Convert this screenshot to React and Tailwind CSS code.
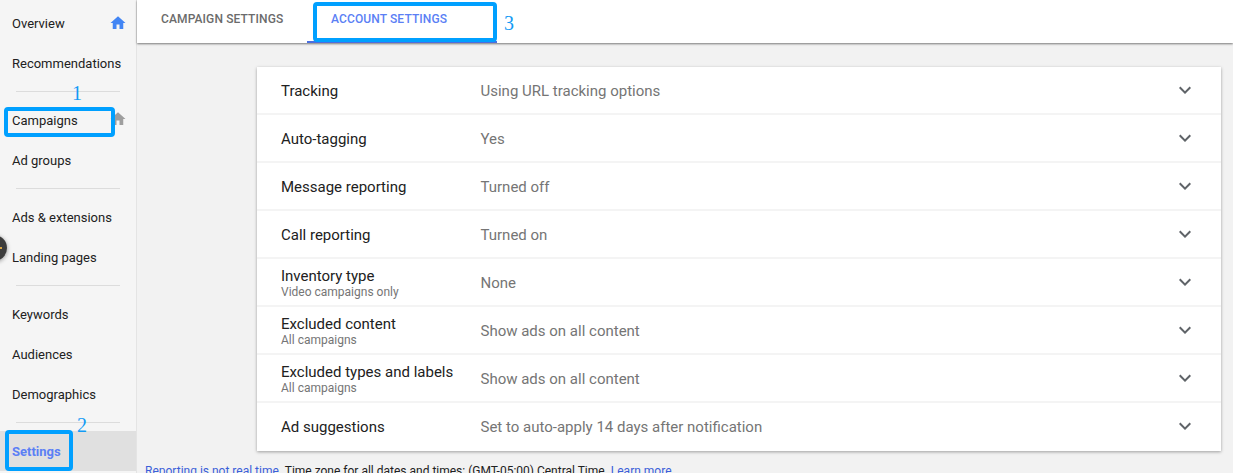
import React from "react";

const Home = ({ className }) => (
  <svg viewBox="0 0 24 24" className={className} fill="currentColor">
    <path d="M10 20v-6h4v6h5v-8h3L12 3 2 12h3v8z" />
  </svg>
);

const Chevron = () => (
  <svg viewBox="0 0 24 24" className="w-6 h-6 text-[#5f6368] -translate-y-px" fill="currentColor">
    <path d="M7.41 8.59 12 13.17l4.59-4.58L18 10l-6 6-6-6z" />
  </svg>
);

const Item = ({ children, icon, active }) => (
  <div className={`h-10 flex items-center justify-between pl-3 pr-[9px] text-[13px] ${active ? "bg-[#e0e0e0] text-[#5b7ff5] font-bold" : "text-[#212121]"}`}>
    <span className="translate-y-px">{children}</span>
    {icon}
  </div>
);

const Divider = () => <div className="my-2 mx-4 h-px bg-[#dcdcdc]" />;

const rows = [
  ["Tracking", null, "Using URL tracking options"],
  ["Auto-tagging", null, "Yes"],
  ["Message reporting", null, "Turned off"],
  ["Call reporting", null, "Turned on"],
  ["Inventory type", "Video campaigns only", "None"],
  ["Excluded content", "All campaigns", "Show ads on all content"],
  ["Excluded types and labels", "All campaigns", "Show ads on all content"],
  ["Ad suggestions", null, "Set to auto-apply 14 days after notification"],
];

const Num = ({ className, children }) => (
  <span className={`absolute text-[20px] leading-none text-[#129bf5] ${className}`} style={{ fontFamily: '"Liberation Serif", serif' }}>
    {children}
  </span>
);

export default function App() {
  return (
    <div className="relative h-[473px] w-[1233px] overflow-hidden flex bg-[#f2f2f2]" style={{ fontFamily: 'Roboto, sans-serif' }}>
      <aside className="w-[137px] shrink-0 bg-[#f5f5f5] border-r border-[#e4e4e4] pt-[3px] box-border">
        <Item icon={<Home className="w-[18px] h-[18px] text-[#4285f4]" />}>Overview</Item>
        <Item>Recommendations</Item>
        <Divider />
        <Item icon={<Home className="w-[18px] h-[18px] text-[#9e9e9e] -translate-y-px" />}>Campaigns</Item>
        <Item>Ad groups</Item>
        <Divider />
        <Item>Ads &amp; extensions</Item>
        <Item>Landing pages</Item>
        <Divider />
        <Item>Keywords</Item>
        <Item>Audiences</Item>
        <Item>Demographics</Item>
        <Divider />
        <Item active>Settings</Item>
      </aside>

      <main className="flex-1 min-w-0 flex flex-col">
        <div className="h-[43px] shrink-0 bg-white shadow-[0_1px_2px_rgba(0,0,0,0.5)] flex text-[12px] font-medium tracking-[0.12px]">
          <div className="w-[170px] pl-6 pt-[10px] text-[#6b6b6b]">CAMPAIGN SETTINGS</div>
          <div className="w-[190px] pl-6 pt-[10px] text-[#5b7ff5] border-b-2 border-[#4a6ee0] box-border">ACCOUNT SETTINGS</div>
        </div>

        <div className="mt-6 ml-[120px] mr-3 bg-white shadow-[0_1px_3px_rgba(0,0,0,0.35)]">
          {rows.map(([label, sub, value], i) => (
            <div key={label} className={`h-12 box-border flex items-center pl-6 pr-6 ${i < rows.length - 1 ? "shadow-[inset_0_-2px_0_#f4f4f4]" : ""}`}>
              <div className="w-[199.5px] shrink-0">
                <div className="text-[15px] leading-[18px] text-[#212121]">{label}</div>
                {sub && <div className="text-[12px] leading-[14px] text-[#757575]">{sub}</div>}
              </div>
              <div className="flex-1 text-[15px] leading-[18px] text-[#757575]">{value}</div>
              <Chevron />
            </div>
          ))}
        </div>

        <div className="mt-3 ml-2 text-[12px] leading-[16px] whitespace-nowrap text-[#212121]">
          <span className="text-[#3b5fd9]">Reporting is not real time.</span> Time zone for all dates and times: (GMT-05:00) Central Time. <span className="text-[#3b5fd9]">Learn more</span>
        </div>
      </main>

      {/* annotations */}
      <div className="absolute left-[4px] top-[107px] w-[111px] h-[30px] border-4 border-[#00a0ff] rounded-sm" />
      <div className="absolute left-[5px] top-[430px] w-[68px] h-[41px] border-4 border-[#00a0ff] rounded-sm" />
      <div className="absolute left-[313px] top-[2px] w-[184px] h-[40px] border-4 border-[#00a0ff] rounded-sm" />
      <Num className="left-[72px] top-[83px]">1</Num>
      <Num className="left-[77px] top-[415px]">2</Num>
      <Num className="left-[504px] top-[13px]">3</Num>
      <div className="absolute left-[-19px] top-[235px] w-[26px] h-[26px] rounded-full bg-[#3c3c3c] shadow-[0_1px_4px_rgba(0,0,0,0.4)]" />
      <div className="absolute left-0 top-[247px] w-[2px] h-[2px] bg-[#d9a441]" />
    </div>
  );
}
